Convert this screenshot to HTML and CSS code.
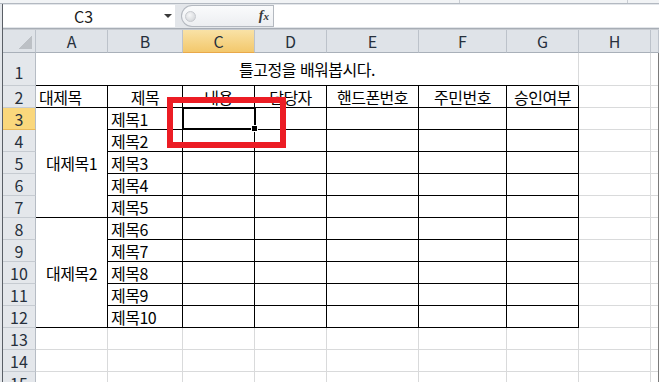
FILE: index.html
```html
<!DOCTYPE html>
<html lang="ko">

<head>
    <meta charset="UTF-8">
    <meta name="viewport" content="width=device-width, initial-scale=1.0">
    <title>틀고정</title>
    <link rel="stylesheet" href="styles.css">
</head>

<body>
    <div class="ribbon-edge">
        <div class="rb-group rb-wide"></div>
        <div class="rb-group rb-narrow"></div>
    </div>

    <div class="workspace">
        <div class="window-edge"></div>

        <div class="main">
            <!-- 수식 입력줄 -->
            <div class="formula-bar">
                <div class="name-box">
                    <span class="value">C3</span>
                    <span class="arrow"></span>
                </div>
                <div class="fx-box">
                    <span class="fx-knob"></span>
                    <span class="fx-label">f<small>x</small></span>
                </div>
                <div class="formula-input"></div>
            </div>
            <div class="bar-gap"></div>

            <!-- 시트 -->
            <div class="sheet">
                <div class="cell corner"><span class="corner-mark"></span></div>
                <div class="cell col-head">A</div>
                <div class="cell col-head">B</div>
                <div class="cell col-head active">C</div>
                <div class="cell col-head">D</div>
                <div class="cell col-head">E</div>
                <div class="cell col-head">F</div>
                <div class="cell col-head">G</div>
                <div class="cell col-head">H</div>
                <div class="cell col-head"></div>

                <div class="cell row-head tall">1</div>
                <div class="cell title">틀고정을 배워봅시다.</div>
                <div class="cell"></div>
                <div class="cell"></div>

                <div class="cell row-head">2</div>
                <div class="cell t">대제목</div>
                <div class="cell t center">제목</div>
                <div class="cell t center">내용</div>
                <div class="cell t center">담당자</div>
                <div class="cell t center">핸드폰번호</div>
                <div class="cell t center">주민번호</div>
                <div class="cell t center">승인여부</div>
                <div class="cell"></div>
                <div class="cell"></div>

                <div class="cell row-head active">3</div>
                <div class="cell t center group">대제목1</div>
                <div class="cell t">제목1</div>
                <div class="cell t active-cell"></div>
                <div class="cell t"></div>
                <div class="cell t"></div>
                <div class="cell t"></div>
                <div class="cell t"></div>
                <div class="cell"></div>
                <div class="cell"></div>

                <div class="cell row-head">4</div>
                <div class="cell t">제목2</div>
                <div class="cell t"></div>
                <div class="cell t"></div>
                <div class="cell t"></div>
                <div class="cell t"></div>
                <div class="cell t"></div>
                <div class="cell"></div>
                <div class="cell"></div>

                <div class="cell row-head">5</div>
                <div class="cell t">제목3</div>
                <div class="cell t"></div>
                <div class="cell t"></div>
                <div class="cell t"></div>
                <div class="cell t"></div>
                <div class="cell t"></div>
                <div class="cell"></div>
                <div class="cell"></div>

                <div class="cell row-head">6</div>
                <div class="cell t">제목4</div>
                <div class="cell t"></div>
                <div class="cell t"></div>
                <div class="cell t"></div>
                <div class="cell t"></div>
                <div class="cell t"></div>
                <div class="cell"></div>
                <div class="cell"></div>

                <div class="cell row-head">7</div>
                <div class="cell t">제목5</div>
                <div class="cell t"></div>
                <div class="cell t"></div>
                <div class="cell t"></div>
                <div class="cell t"></div>
                <div class="cell t"></div>
                <div class="cell"></div>
                <div class="cell"></div>

                <div class="cell row-head">8</div>
                <div class="cell t center group">대제목2</div>
                <div class="cell t">제목6</div>
                <div class="cell t"></div>
                <div class="cell t"></div>
                <div class="cell t"></div>
                <div class="cell t"></div>
                <div class="cell t"></div>
                <div class="cell"></div>
                <div class="cell"></div>

                <div class="cell row-head">9</div>
                <div class="cell t">제목7</div>
                <div class="cell t"></div>
                <div class="cell t"></div>
                <div class="cell t"></div>
                <div class="cell t"></div>
                <div class="cell t"></div>
                <div class="cell"></div>
                <div class="cell"></div>

                <div class="cell row-head">10</div>
                <div class="cell t">제목8</div>
                <div class="cell t"></div>
                <div class="cell t"></div>
                <div class="cell t"></div>
                <div class="cell t"></div>
                <div class="cell t"></div>
                <div class="cell"></div>
                <div class="cell"></div>

                <div class="cell row-head">11</div>
                <div class="cell t">제목9</div>
                <div class="cell t"></div>
                <div class="cell t"></div>
                <div class="cell t"></div>
                <div class="cell t"></div>
                <div class="cell t"></div>
                <div class="cell"></div>
                <div class="cell"></div>

                <div class="cell row-head">12</div>
                <div class="cell t">제목10</div>
                <div class="cell t"></div>
                <div class="cell t"></div>
                <div class="cell t"></div>
                <div class="cell t"></div>
                <div class="cell t"></div>
                <div class="cell"></div>
                <div class="cell"></div>

                <div class="cell row-head">13</div>
                <div class="cell"></div>
                <div class="cell"></div>
                <div class="cell"></div>
                <div class="cell"></div>
                <div class="cell"></div>
                <div class="cell"></div>
                <div class="cell"></div>
                <div class="cell"></div>
                <div class="cell"></div>

                <div class="cell row-head">14</div>
                <div class="cell"></div>
                <div class="cell"></div>
                <div class="cell"></div>
                <div class="cell"></div>
                <div class="cell"></div>
                <div class="cell"></div>
                <div class="cell"></div>
                <div class="cell"></div>
                <div class="cell"></div>

                <div class="cell row-head">15</div>
                <div class="cell"></div>
                <div class="cell"></div>
                <div class="cell"></div>
                <div class="cell"></div>
                <div class="cell"></div>
                <div class="cell"></div>
                <div class="cell"></div>
                <div class="cell"></div>
                <div class="cell"></div>

                <!-- 틀 고정 선 -->
                <div class="freeze-v"></div>
                <div class="freeze-h"></div>
            </div>
        </div>
    </div>

    <div class="callout"></div>
</body>

</html>
```

FILE: styles.css
```css
* {
    box-sizing: border-box;
}

body {
    margin: 0;
    width: 659px;
    height: 382px;
    overflow: hidden;
    position: relative;
    background-color: #fff;
    font-family: "Noto Sans CJK KR", "Noto Sans", sans-serif;
}

.ribbon-edge {
    height: 4px;
    display: flex;
    background-color: #f1f3f5;
    border-bottom: 1px solid #b3b9c1;
}

.rb-group {
    border-right: 1px solid #c9cdd3;
}

.rb-wide {
    width: 460px;
}

.rb-narrow {
    width: 168px;
}

.workspace {
    display: flex;
    height: 378px;
}

.window-edge {
    width: 3px;
    background-color: #e3e6ea;
    border-right: 1px solid #5a5f66;
}

.main {
    flex: 1;
    display: flex;
    flex-direction: column;
}

/* 수식 입력줄 */
.formula-bar {
    height: 24px;
    display: flex;
    align-items: center;
    padding: 1px 0;
    background-color: #e3e6ea;
}

.name-box {
    width: 172px;
    height: 22px;
    display: flex;
    align-items: center;
    background-color: #fff;
    font-size: 16px;
    color: #1b1b1b;
}

.name-box .value {
    flex: 1;
    text-align: center;
}

.name-box .arrow {
    width: 0;
    height: 0;
    margin-right: 3px;
    border-left: 4px solid transparent;
    border-right: 4px solid transparent;
    border-top: 4px solid #3a3a3a;
}

.fx-box {
    width: 92px;
    height: 22px;
    margin-left: 6px;
    display: flex;
    align-items: center;
    padding-left: 3px;
    border: 1px solid #b4b9c0;
    border-right: none;
    border-radius: 11px 0 0 11px;
    background: linear-gradient(#fafbfc, #eceef1);
}

.fx-knob {
    width: 11px;
    height: 11px;
    border-radius: 50%;
    border: 1px solid #c6c9ce;
    background: radial-gradient(circle at 40% 35%, #f6f7f8, #cdd0d4);
}

.fx-label {
    margin-left: auto;
    margin-right: 4px;
    font-family: "Liberation Serif", serif;
    font-style: italic;
    font-weight: bold;
    font-size: 14px;
    color: #3a3a3a;
}

.fx-label small {
    font-size: 11px;
}

.formula-input {
    flex: 1;
    height: 22px;
    background-color: #fff;
    border-left: 1px solid #b4b9c0;
}

.bar-gap {
    height: 3px;
    background-color: #eef0f2;
    border-top: 1px solid #a7adb5;
    border-bottom: 1px solid #c6cad0;
}

/* 시트 */
.sheet {
    position: relative;
    display: grid;
    grid-template-columns: 33px 72px 75px 72px 72px 92px 88px 72px 72px 1fr;
    grid-template-rows: 23px 33px repeat(14, 22px);
    font-size: 16px;
}

.cell {
    display: flex;
    align-items: center;
    padding: 0 3px;
    white-space: nowrap;
    line-height: 20px;
    letter-spacing: -0.5px;
    color: #000;
    border-right: 1px solid #d9dadb;
    border-bottom: 1px solid #d9dadb;
}

.cell.t {
    border-color: #000;
}

.cell.center {
    justify-content: center;
}

.cell.group {
    grid-row: span 5;
}

.title {
    grid-column: span 7;
    justify-content: center;
    border-bottom-color: #000;
}

.col-head {
    justify-content: center;
    letter-spacing: 0;
    color: #27303c;
    background-color: #dfe3e8;
    border-right-color: #bcc2ca;
    border-bottom-color: #a9b0b9;
}

.col-head.active {
    background: linear-gradient(#f9e2a6, #f3c86c);
    border-bottom-color: #e9a84a;
}

.row-head {
    justify-content: center;
    letter-spacing: 0;
    color: #27303c;
    background-color: #e4e7eb;
    border-right-color: #b6bcc4;
    border-bottom-color: #c6cbd1;
}

.row-head.tall {
    align-items: flex-end;
    padding-bottom: 3px;
}

.row-head.active {
    background-color: #fad77c;
    border-bottom-color: #e9b95a;
}

.corner {
    position: relative;
    background-color: #dfe3e8;
    border-right-color: #bcc2ca;
    border-bottom-color: #a9b0b9;
}

.corner-mark {
    position: absolute;
    right: 3px;
    bottom: 3px;
    width: 13px;
    height: 13px;
    background: linear-gradient(to top left, #bcc0c5 50%, transparent 50%);
}

.active-cell {
    position: relative;
}

.active-cell::after {
    content: "";
    position: absolute;
    left: -1px;
    top: -1px;
    right: -2px;
    bottom: -1px;
    border: 2px solid #000;
}

.active-cell::before {
    content: "";
    position: absolute;
    right: -4px;
    bottom: -3px;
    width: 5px;
    height: 5px;
    z-index: 1;
    background-color: #000;
    border: 1px solid #fff;
}

/* 틀 고정 선: 격자 영역 위에 겹침 */
.freeze-v,
.freeze-h {
    position: absolute;
    top: 0;
    left: 0;
    right: 0;
    bottom: 0;
    pointer-events: none;
}

.freeze-v {
    grid-column: 3;
    grid-row: 2 / -1;
    border-right: 1px solid #7b7b7b;
}

.freeze-h {
    grid-column: 9 / -1;
    grid-row: 3;
    border-bottom: 1px solid #8d8d8d;
}

/* 빨간 표시 */
.callout {
    position: absolute;
    left: 167px;
    top: 97px;
    width: 119px;
    height: 51px;
    border: 6px solid #ec1c24;
}
```
